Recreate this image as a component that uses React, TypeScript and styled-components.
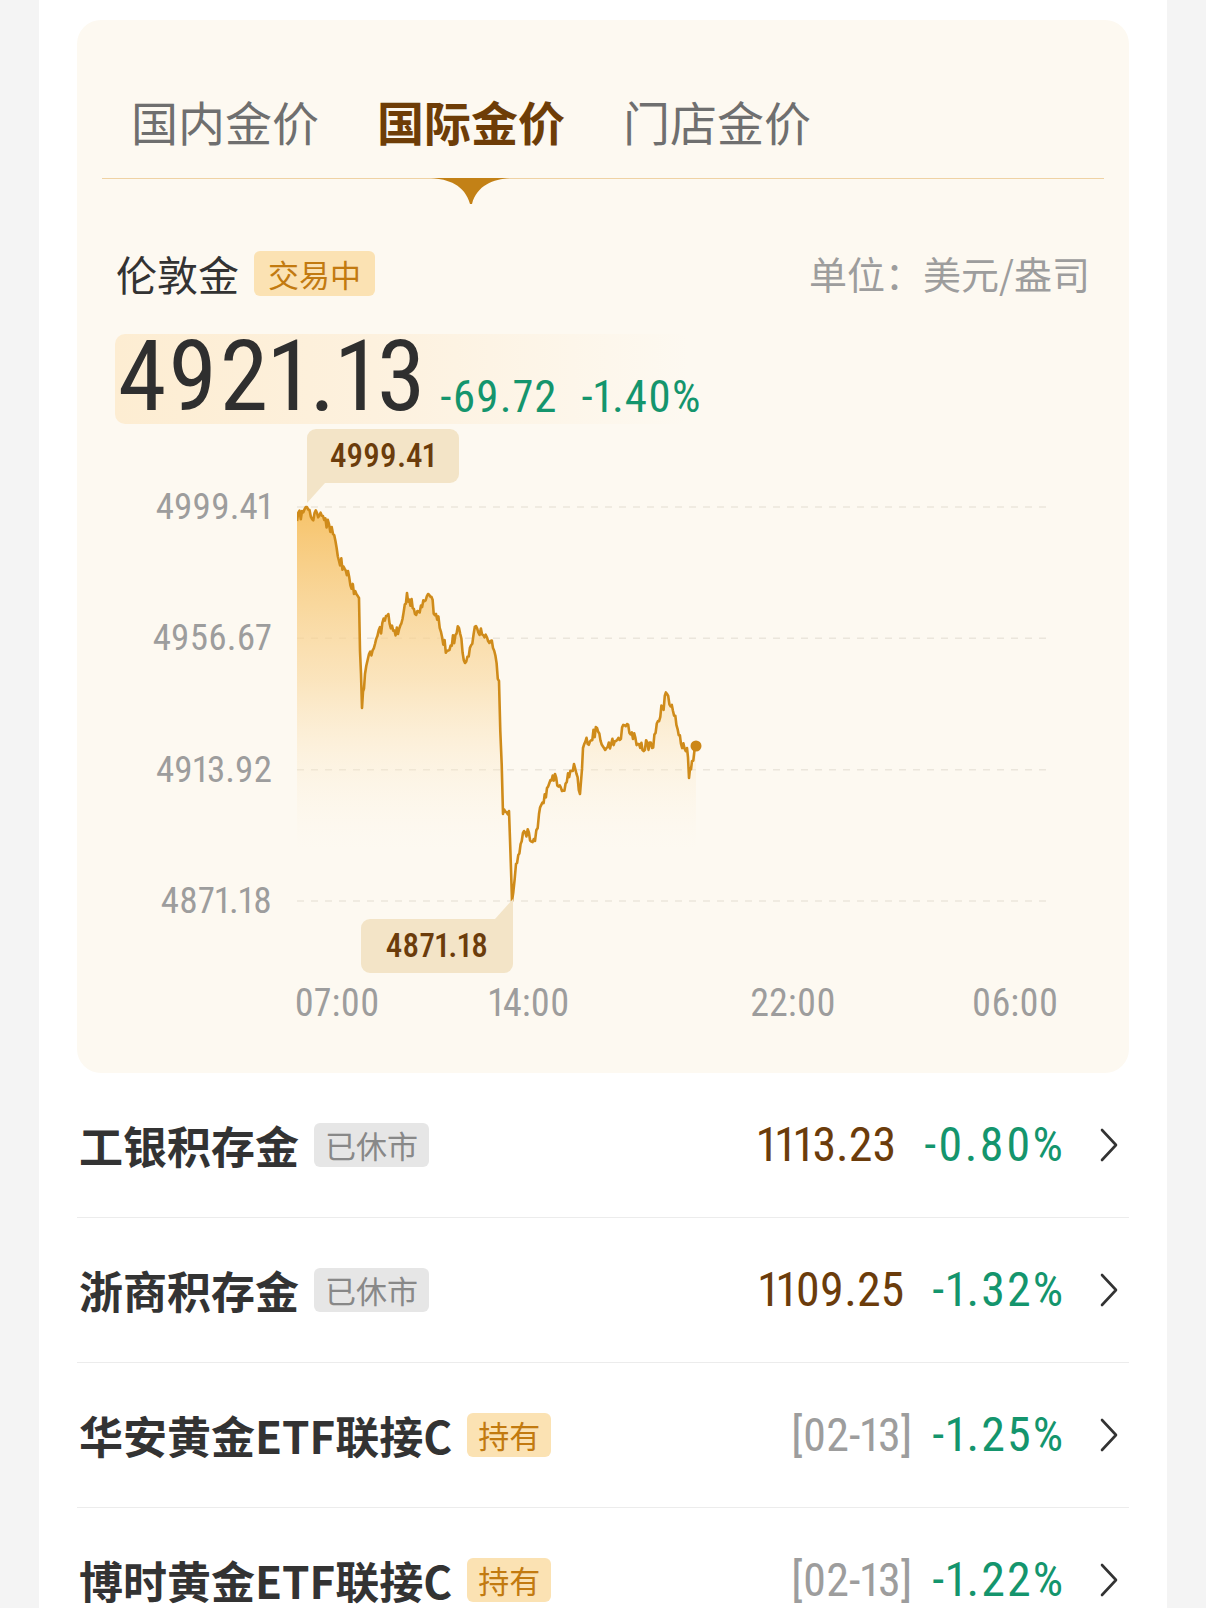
import React from 'react';
import styled, { createGlobalStyle } from 'styled-components';

const NUM = '"Roboto Condensed", "Noto Sans", "DejaVu Sans", sans-serif';

const GlobalStyle = createGlobalStyle`
	body {
		margin: 0;
		background: #f4f4f4;
		font-family: "Noto Sans CJK SC", "Noto Sans", sans-serif;
		color: #333;
	}
`;

type Row = {
	name: string;
	tag: string;
	held: boolean;
	price?: string;
	date?: string;
	change: string;
};

const rows: Row[] = [
	{ name: '工银积存金', tag: '已休市', held: false, price: '1113.23', change: '-0.80%' },
	{ name: '浙商积存金', tag: '已休市', held: false, price: '1109.25', change: '-1.32%' },
	{ name: '华安黄金ETF联接C', tag: '持有', held: true, date: '[02-13]', change: '-1.25%' },
	{ name: '博时黄金ETF联接C', tag: '持有', held: true, date: '[02-13]', change: '-1.22%' },
];

const yLabels = ['4999.41', '4956.67', '4913.92', '4871.18'];
const ticks = [
	{ label: '07:00', at: 40 },
	{ label: '14:00', at: 232 },
	{ label: '22:00', at: 496 },
	{ label: '06:00', at: 718 },
];

const PLOT_W = 751;
const PLOT_H = 440;
const GRID = [26, 157.3, 288.7, 420];

// rough shape of the day's curve, noise is added between these points
const keys: [number, number][] = [
	[0, 40], [5, 30], [10, 26], [15, 38], [20, 32], [32, 43], [36, 53], [42, 80], [51, 90],
	[57, 113], [62, 117], [63, 170], [65, 227], [68, 193], [72, 173], [78, 163], [89, 135],
	[101, 153], [110, 112], [118, 133], [131, 113], [139, 133], [150, 170], [162, 147],
	[168, 182], [179, 145], [196, 167], [202, 200], [206, 333], [212, 330], [215, 420],
	[219, 383], [227, 350], [238, 360], [242, 333], [250, 307], [258, 293], [265, 310],
	[277, 283], [283, 313], [286, 267], [300, 247], [307, 267], [319, 260], [330, 243],
	[342, 263], [355, 267], [361, 240], [370, 213], [376, 230], [384, 263], [390, 267],
	[392, 297], [395, 280], [399, 265],
];

function seeded(seed: number) {
	let a = seed;
	return () => {
		a |= 0;
		a = (a + 0x6d2b79f5) | 0;
		let t = Math.imul(a ^ (a >>> 15), 1 | a);
		t = (t + Math.imul(t ^ (t >>> 7), 61 | t)) ^ t;
		return ((t ^ (t >>> 14)) >>> 0) / 4294967296;
	};
}

function buildSeries() {
	const rnd = seeded(7);
	const pts: [number, number][] = [];
	for (let i = 0; i < keys.length - 1; i++) {
		const [x0, y0] = keys[i];
		const [x1, y1] = keys[i + 1];
		const n = Math.max(1, Math.round((x1 - x0) / 1.2));
		for (let j = 0; j < n; j++) {
			const t = j / n;
			let y = y0 + (y1 - y0) * t;
			if (j > 0) y += (rnd() - 0.5) * 12;
			y = Math.min(420, Math.max(26, y));
			pts.push([x0 + (x1 - x0) * t, y]);
		}
	}
	pts.push(keys[keys.length - 1]);
	return pts;
}

const series = buildSeries();
const linePath = series.map((p, i) => `${i ? 'L' : 'M'}${p[0].toFixed(1)} ${p[1].toFixed(1)}`).join(' ');
const last = series[series.length - 1];
const areaPath = `${linePath} L${last[0]} ${PLOT_H} L0 ${PLOT_H} Z`;

const App = () => {
	return (
		<>
			<GlobalStyle />
			<Page>
				<Card>
					<TabBar>
						<Tab>国内金价</Tab>
						<Tab $active>
							国际金价
							<Caret viewBox="0 0 80 26" width="80" height="26">
								<path d="M0 0 L80 0 C63 1 46 7 41 26 L39 26 C34 7 17 1 0 0 Z" fill="#c38116" />
							</Caret>
						</Tab>
						<Tab>门店金价</Tab>
					</TabBar>

					<InfoRow>
						<QuoteName>伦敦金</QuoteName>
						<Tag $held>交易中</Tag>
						<Unit>单位：美元/盎司</Unit>
					</InfoRow>

					<PriceRow>
						<BigPrice>4921.13</BigPrice>
						<Delta>-69.72</Delta>
						<Delta>-1.40%</Delta>
					</PriceRow>

					<Chart>
						<YAxis>
							{yLabels.map((l) => (
								<YLabel key={l}>{l}</YLabel>
							))}
						</YAxis>
						<Plot>
							<svg width={PLOT_W} height={PLOT_H} viewBox={`0 0 ${PLOT_W} ${PLOT_H}`}>
								<defs>
									<linearGradient id="goldFill" x1="0" y1="26" x2="0" y2="370" gradientUnits="userSpaceOnUse">
										<stop offset="0" stopColor="#f6c062" stopOpacity="0.95" />
										<stop offset="0.5" stopColor="#f9d699" stopOpacity="0.6" />
										<stop offset="1" stopColor="#fdf3e2" stopOpacity="0" />
									</linearGradient>
								</defs>
								{GRID.map((y) => (
									<line key={y} x1="0" x2={PLOT_W} y1={y} y2={y} stroke="#ebe6dc" strokeWidth="1.5" strokeDasharray="7 7" />
								))}
								<path d={areaPath} fill="url(#goldFill)" />
								<path d={linePath} fill="none" stroke="#cf8b1a" strokeWidth="2.6" strokeLinejoin="round" />
								<circle cx={last[0]} cy={last[1]} r="5.5" fill="#cc8717" />
							</svg>
							<HighTip>4999.41</HighTip>
							<LowTip>4871.18</LowTip>
						</Plot>
					</Chart>

					<TimeAxis>
						{ticks.map((t) => (
							<Tick key={t.label} style={{ left: t.at }}>
								{t.label}
							</Tick>
						))}
					</TimeAxis>
				</Card>

				<List>
					{rows.map((r) => (
						<ListRow key={r.name}>
							<RowName>{r.name}</RowName>
							<Tag $held={r.held} $small>
								{r.tag}
							</Tag>
							<RowRight>
								{r.price && <RowPrice>{r.price}</RowPrice>}
								{r.date && <RowDate>{r.date}</RowDate>}
								<RowChange>{r.change}</RowChange>
								<Chevron viewBox="0 0 20 34" width="20" height="34">
									<path d="M3 2 L17 17 L3 32" fill="none" stroke="#333" strokeWidth="2.6" strokeLinecap="round" strokeLinejoin="round" />
								</Chevron>
							</RowRight>
						</ListRow>
					))}
				</List>
			</Page>
		</>
	);
};

const Page = styled.div`
	box-sizing: border-box;
	width: 1128px;
	min-height: 1608px;
	margin: 0 auto;
	padding: 20px 38px 0 38px;
	background: #fff;
`;

const Card = styled.div`
	background: #fdf9f1;
	border-radius: 24px;
	padding: 0 25px 50px 25px;
`;

const TabBar = styled.div`
	display: flex;
	gap: 58px;
	padding: 76px 0 32px 29px;
	border-bottom: 1.5px solid #efd2a4;
`;

const Tab = styled.div<{ $active?: boolean }>`
	position: relative;
	font-size: 47px;
	line-height: 50px;
	font-weight: ${(p) => (p.$active ? 700 : 400)};
	color: ${(p) => (p.$active ? '#6e3d07' : '#6f6f6f')};
`;

const Caret = styled.svg`
	position: absolute;
	left: 50%;
	top: calc(100% + 32px);
	transform: translateX(-50%);
	display: block;
`;

const InfoRow = styled.div`
	display: flex;
	align-items: center;
	margin-top: 71px;
	padding: 0 14px;
	height: 46px;
`;

const QuoteName = styled.div`
	font-size: 41px;
	line-height: 46px;
	color: #333;
`;

const Tag = styled.span<{ $held?: boolean; $small?: boolean }>`
	margin-left: 15px;
	padding: 0 ${(p) => (p.$small ? 11 : 14)}px;
	height: ${(p) => (p.$small ? 44 : 45)}px;
	line-height: ${(p) => (p.$small ? 44 : 45)}px;
	border-radius: 6px;
	font-size: 31px;
	font-weight: 400;
	background: ${(p) => (p.$held ? '#fbe2b3' : '#e6e6e6')};
	color: ${(p) => (p.$held ? '#c27a10' : '#888')};
`;

const Unit = styled.div`
	margin-left: auto;
	font-size: 38px;
	line-height: 46px;
	color: #9d9d9d;
`;

const Num = styled.div`
	font-family: ${NUM};
	font-variant-numeric: proportional-nums;
	line-height: 1.1;
`;

const PriceRow = styled.div`
	display: flex;
	align-items: baseline;
	margin-top: 38px;
	margin-left: 13px;
	width: 574px;
	height: 90px;
	border-radius: 10px;
	background: linear-gradient(90deg, #fdedd2 0%, #fdf1de 45%, rgba(253, 246, 235, 0) 100%);
`;

const BigPrice = styled(Num)`
	font-size: 98px;
	line-height: 90px;
	letter-spacing: 2px;
	color: #2f2f2f;
	padding-left: 3px;
	position: relative;
	top: -2px;
`;

const Delta = styled(Num)`
	font-size: 45px;
	letter-spacing: 1px;
	color: #14956d;
	margin-left: 13px;
	& + & {
		margin-left: 24px;
	}
`;

const Chart = styled.div`
	display: grid;
	grid-template-columns: 170px ${PLOT_W}px;
	column-gap: 25px;
	margin-top: 57px;
`;

const YAxis = styled.div`
	display: flex;
	flex-direction: column;
	justify-content: space-between;
	align-items: flex-end;
	height: ${PLOT_H}px;
	padding-top: 6px;
	box-sizing: border-box;
`;

const YLabel = styled(Num)`
	font-size: 37px;
	line-height: 40px;
	color: #9d9d9d;
`;

const Plot = styled.div`
	position: relative;
	height: ${PLOT_H}px;
	svg {
		display: block;
	}
`;

const Tip = styled(Num)`
	position: absolute;
	width: 152px;
	height: 54px;
	line-height: 54px;
	text-align: center;
	background: #f3e4c7;
	border-radius: 9px;
	font-size: 33px;
	font-weight: 500;
	color: #6b3c0b;
	&::after {
		content: '';
		position: absolute;
		width: 18px;
		height: 20px;
		background: #f3e4c7;
	}
`;

const HighTip = styled(Tip)`
	left: 10px;
	top: -52px;
	border-bottom-left-radius: 0;
	&::after {
		left: 0;
		top: 100%;
		clip-path: polygon(0 0, 100% 0, 0 100%);
	}
`;

const LowTip = styled(Tip)`
	left: 64px;
	top: 438px;
	border-top-right-radius: 0;
	&::after {
		right: 0;
		bottom: 100%;
		clip-path: polygon(100% 0, 100% 100%, 0 100%);
	}
`;

const TimeAxis = styled.div`
	position: relative;
	margin-left: 195px;
	margin-top: 62px;
	height: 40px;
`;

const Tick = styled(Num)`
	position: absolute;
	top: 0;
	transform: translateX(-50%);
	font-size: 38px;
	line-height: 40px;
	color: #9d9d9d;
`;

const List = styled.div`
	display: flex;
	flex-direction: column;
`;

const ListRow = styled.div`
	display: flex;
	align-items: center;
	height: 144px;
	padding-left: 2px;
	border-bottom: 1px solid #ececec;
`;

const RowName = styled.div`
	font-size: 44px;
	line-height: 48px;
	font-weight: 700;
	color: #333;
`;

const RowRight = styled.div`
	margin-left: auto;
	display: flex;
	align-items: center;
	padding-right: 10px;
`;

const RowPrice = styled(Num)`
	font-size: 48px;
	color: #6b3c0b;
	margin-right: 28px;
`;

const RowDate = styled(Num)`
	font-size: 46px;
	color: #9d9d9d;
	margin-right: 20px;
`;

const RowChange = styled(Num)`
	font-size: 48px;
	letter-spacing: 2px;
	color: #14956d;
	margin-right: 34px;
`;

const Chevron = styled.svg`
	display: block;
`;

export default App;
